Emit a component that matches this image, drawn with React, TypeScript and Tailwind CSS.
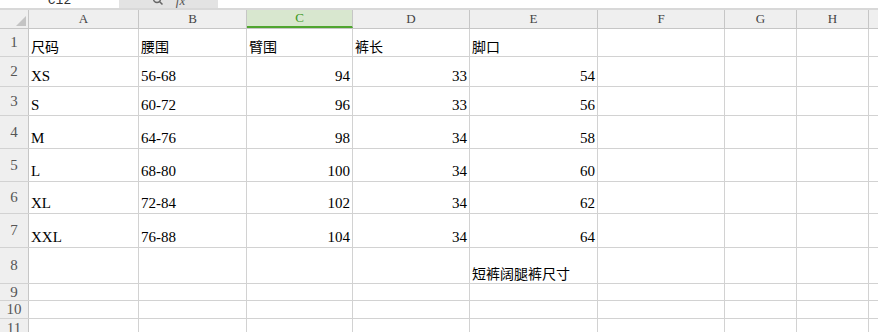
import React from "react";

const cols = ["A", "B", "C", "D", "E", "F", "G", "H"];
const colW = ["w-[110px]", "w-[108px]", "w-[106px]", "w-[117px]", "w-[128px]", "w-[127px]", "w-[72px]", "w-[72px]"];
const rowH = ["h-[28px]", "h-[30px]", "h-[29px]", "h-[33px]", "h-[33px]", "h-[32px]", "h-[34px]", "h-[36px]", "h-[17px]", "h-[18px]", "h-[20px]"];

type Cell = { v: string; num?: boolean; cjk?: boolean };

const rows: (Cell | null)[][] = [
  [{ v: "尺码", cjk: true }, { v: "腰围", cjk: true }, { v: "臂围", cjk: true }, { v: "裤长", cjk: true }, { v: "脚口", cjk: true }],
  [{ v: "XS" }, { v: "56-68" }, { v: "94", num: true }, { v: "33", num: true }, { v: "54", num: true }],
  [{ v: "S" }, { v: "60-72" }, { v: "96", num: true }, { v: "33", num: true }, { v: "56", num: true }],
  [{ v: "M" }, { v: "64-76" }, { v: "98", num: true }, { v: "34", num: true }, { v: "58", num: true }],
  [{ v: "L" }, { v: "68-80" }, { v: "100", num: true }, { v: "34", num: true }, { v: "60", num: true }],
  [{ v: "XL" }, { v: "72-84" }, { v: "102", num: true }, { v: "34", num: true }, { v: "62", num: true }],
  [{ v: "XXL" }, { v: "76-88" }, { v: "104", num: true }, { v: "34", num: true }, { v: "64", num: true }],
  [null, null, null, null, { v: "短裤阔腿裤尺寸", cjk: true }],
  [],
  [],
  [],
];

const serif = "font-['Liberation_Serif','Noto_Sans_CJK_SC',serif]";
const mono = "font-['Liberation_Mono',monospace]";
const cjk = "font-['Noto_Sans_CJK_SC',sans-serif]";

export default function App() {
  return (
    <div className="w-[878px] h-[332px] overflow-hidden bg-white text-black">
      {/* formula bar, mostly scrolled out of view */}
      <div className="flex h-[8px] overflow-hidden">
        <div className="w-[119px] bg-white flex justify-center">
          <span className={`${mono} text-[13px] text-[#333] leading-none -mt-[6px]`}>C12</span>
        </div>
        <div className="w-[99px] bg-[#e3e3e3] flex items-start justify-center gap-3">
          <svg width="12" height="12" viewBox="0 0 12 12" className="-mt-[6px]">
            <circle cx="5" cy="5" r="3.5" fill="none" stroke="#666" strokeWidth="1.4" />
            <path d="M7.5 7.5 L10.5 10.5" stroke="#666" strokeWidth="1.5" />
          </svg>
          <span className="font-['Liberation_Serif',serif] italic text-[13px] text-[#555] leading-none -mt-[6px]">fx</span>
        </div>
        <div className="flex-1 bg-white" />
      </div>
      <div className="h-[2px] bg-[#d8d8d8]" />

      {/* column headers */}
      <div className="flex h-[19px] bg-[#efefef] border-b border-[#c6c6c6]">
        <div className="w-[29px] border-r border-[#c6c6c6] relative">
          <svg width="10" height="10" viewBox="0 0 10 10" className="absolute right-[2px] bottom-[2px]">
            <path d="M10 0 L10 10 L0 10 Z" fill="#c4c4c4" />
          </svg>
        </div>
        {cols.map((c, i) => (
          <div
            key={c}
            className={`${colW[i]} border-r border-[#c6c6c6] flex items-center justify-center ${serif} text-[13px] ${
              c === "C" ? "bg-[#d8e7cf] text-[#3d9a1f] border-b-2 border-b-[#4fa52f]" : "text-[#444]"
            }`}
          >
            {c}
          </div>
        ))}
        <div className="flex-1" />
      </div>

      {/* grid body */}
      {rows.map((r, ri) => (
        <div key={ri} className={`flex ${rowH[ri]} border-b border-[#d2d2d2]`}>
          <div className={`w-[29px] shrink-0 bg-[#efefef] border-r border-[#c6c6c6] flex items-center justify-center ${serif} text-[15px] text-[#555]`}>
            {ri + 1}
          </div>
          {cols.map((c, ci) => {
            const cell = r[ci];
            return (
              <div
                key={c}
                className={`${colW[ci]} shrink-0 border-r border-[#d2d2d2] flex items-end pb-[1px] px-[2px] whitespace-nowrap ${
                  cell?.num ? "justify-end" : "justify-start"
                }`}
              >
                {cell && (
                  <span
                    className={
                      cell.cjk
                        ? `${cjk} text-[14px] leading-[17px]`
                        : `${serif} text-[15px] leading-[17px]`
                    }
                  >
                    {cell.v}
                  </span>
                )}
              </div>
            );
          })}
          <div className="flex-1" />
        </div>
      ))}
    </div>
  );
}
